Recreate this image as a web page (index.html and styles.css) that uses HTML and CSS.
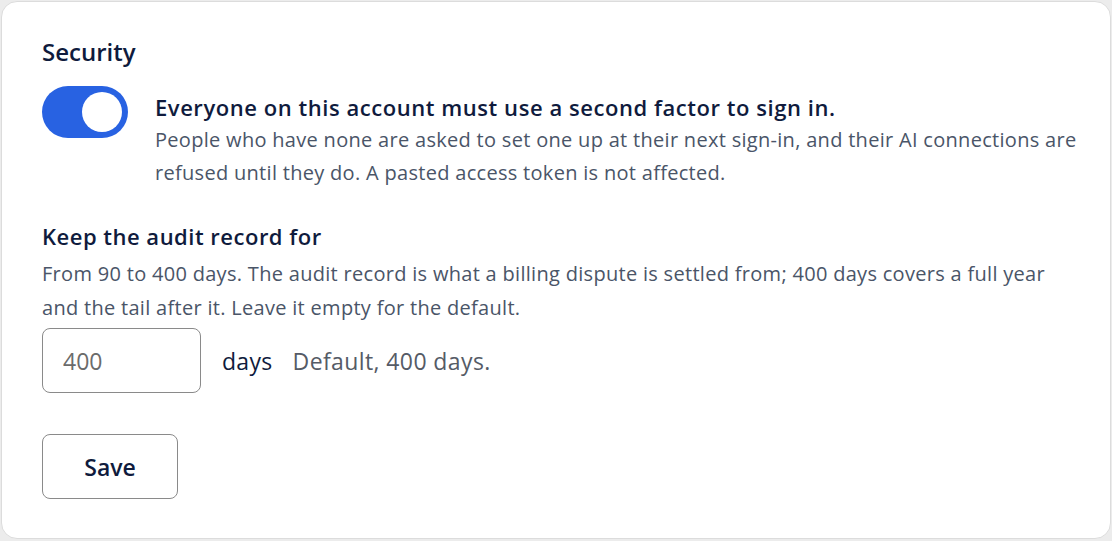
FILE: index.html
```html
<!DOCTYPE html>
<html lang="en">
<head>
<meta charset="utf-8">
<title>Security</title>
<link rel="stylesheet" href="styles.css">
</head>
<body>
<section class="card">
  <h2 class="title">Security</h2>
  <div class="toggle-row">
    <button class="switch" role="switch" aria-checked="true"><span class="knob"></span></button>
    <div class="toggle-text">
      <div class="toggle-label">Everyone on this account must use a second factor to sign in.</div>
      <p class="desc">People who have none are asked to set one up at their next sign-in, and their AI connections are refused until they do. A pasted access token is not affected.</p>
    </div>
  </div>
  <div class="field">
    <div class="field-label">Keep the audit record for</div>
    <p class="desc">From 90 to 400 days. The audit record is what a billing dispute is settled from; 400 days covers a full year and the tail after it. Leave it empty for the default.</p>
    <div class="input-row">
      <input class="num" type="text" placeholder="400">
      <span class="unit">days</span>
      <span class="hint">Default, 400 days.</span>
    </div>
  </div>
  <button class="save">Save</button>
</section>
</body>
</html>
```
FILE: styles.css
```css
* { box-sizing: border-box; }
html, body { margin: 0; padding: 0; background: #ececec; }
body {
  font-family: "Open Sans", "Noto Sans", sans-serif;
  color: #0f1b3d;
  width: 1112px;
  height: 541px;
  padding: 1px 1px 2px 1px;
}
.card {
  height: 100%;
  background: #fff;
  border: 1px solid #dcdcdc;
  border-radius: 16px;
  padding: 34px 20px 0 40px;
}
.title {
  margin: 0;
  font-size: 24px;
  font-weight: 600;
  line-height: 32px;
}
.toggle-row {
  display: flex;
  gap: 27px;
  margin-top: 18px;
}
.switch {
  flex: none;
  width: 86px;
  height: 52px;
  border: none;
  border-radius: 26px;
  background: #2862e2;
  padding: 6px;
  display: flex;
  justify-content: flex-end;
}
.knob {
  width: 40px;
  height: 40px;
  border-radius: 50%;
  background: #fff;
}
.toggle-label {
  font-size: 22px;
  font-weight: 600;
  letter-spacing: 0.55px;
  line-height: 30px;
  margin-top: 6px;
}
.desc {
  margin: 0;
  font-size: 20px;
  letter-spacing: 0.3px;
  line-height: 33px;
  color: #4a5568;
}
.toggle-text .desc { margin-top: 1px; max-width: 930px; }
.field { margin-top: 32px; }
.field-label {
  font-size: 22px;
  font-weight: 600;
  letter-spacing: 0.5px;
  line-height: 30px;
}
.field .desc { margin-top: 6px; line-height: 34px; max-width: 1020px; }
.input-row {
  display: flex;
  align-items: center;
  margin-top: 3px;
}
.num {
  width: 159px;
  height: 65px;
  border: 1px solid #8a8a8a;
  border-radius: 8px;
  padding: 0 20px;
  font-family: inherit;
  font-size: 23px;
  color: #333;
}
.num::placeholder { color: #6b6b6b; }
.unit {
  margin-left: 21px;
  font-size: 23px;
  letter-spacing: 0.3px;
  color: #0f1b3d;
}
.hint {
  margin-left: 20px;
  font-size: 23px;
  letter-spacing: 0.4px;
  color: #555b66;
}
.save {
  display: block;
  margin-top: 41px;
  width: 136px;
  height: 65px;
  background: #fff;
  border: 1px solid #8a8a8a;
  border-radius: 8px;
  font-family: inherit;
  font-size: 23px;
  font-weight: 600;
  color: #0f1b3d;
}
```
